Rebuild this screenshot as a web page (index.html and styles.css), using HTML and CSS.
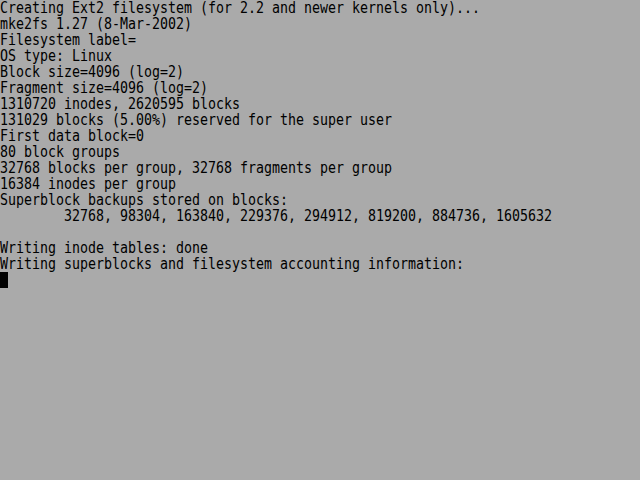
FILE: index.html
```html
<!DOCTYPE html>
<html>
<head>
<meta charset="utf-8">
<link rel="stylesheet" href="styles.css">
</head>
<body>
<div class="screen">
<pre class="console">Creating Ext2 filesystem (for 2.2 and newer kernels only)...
mke2fs 1.27 (8-Mar-2002)
Filesystem label=
OS type: Linux
Block size=4096 (log=2)
Fragment size=4096 (log=2)
1310720 inodes, 2620595 blocks
131029 blocks (5.00%) reserved for the super user
First data block=0
80 block groups
32768 blocks per group, 32768 fragments per group
16384 inodes per group
Superblock backups stored on blocks:
        32768, 98304, 163840, 229376, 294912, 819200, 884736, 1605632

Writing inode tables: done
Writing superblocks and filesystem accounting information:</pre>
<div class="cursor"></div>
</div>
</body>
</html>
```
FILE: styles.css
```css
html, body {
  margin: 0;
  padding: 0;
  background: #aaaaaa;
}
.screen {
  width: 640px;
  height: 480px;
}
.console {
  margin: 0;
  width: max-content;
  font-family: "DejaVu Sans Mono", monospace;
  font-size: 15px;
  line-height: 16px;
  color: #000;
  transform: scaleX(0.8859);
  transform-origin: left top;
  white-space: pre;
}
.cursor {
  width: 8px;
  height: 16px;
  background: #000;
}
```
